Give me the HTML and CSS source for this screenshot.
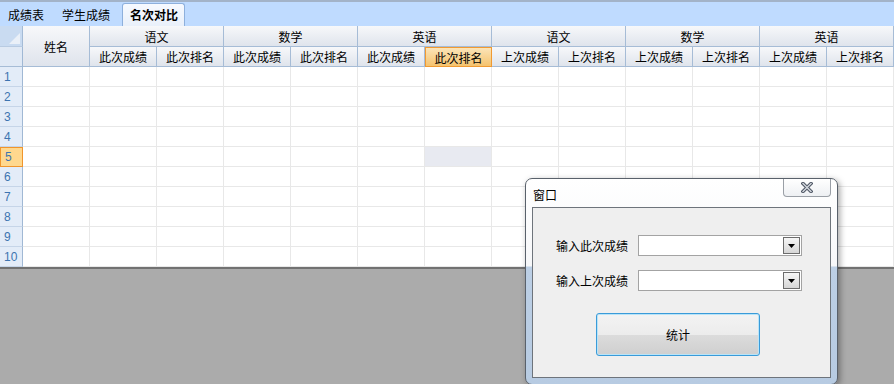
FILE: index.html
```html
<!DOCTYPE html>
<html lang="zh-CN">
<head>
    <meta charset="UTF-8">
    <title>名次对比</title>
    <link rel="stylesheet" href="styles.css">
</head>
<body>

<div class="tabs">
    <div class="tab">成绩表</div>
    <div class="tab second">学生成绩</div>
    <div class="tab active">名次对比</div>
</div>

<div class="sheet">
    <div class="corner"><span class="tri"></span></div>
    <div class="hd name">姓名</div>
    <div class="hd grp">语文</div>
    <div class="hd grp">数学</div>
    <div class="hd grp">英语</div>
    <div class="hd grp">语文</div>
    <div class="hd grp">数学</div>
    <div class="hd grp">英语</div>

    <div class="rh blank"></div>
    <div class="hd">此次成绩</div><div class="hd">此次排名</div>
    <div class="hd">此次成绩</div><div class="hd">此次排名</div>
    <div class="hd">此次成绩</div><div class="hd sel">此次排名</div>
    <div class="hd">上次成绩</div><div class="hd">上次排名</div>
    <div class="hd">上次成绩</div><div class="hd">上次排名</div>
    <div class="hd">上次成绩</div><div class="hd">上次排名</div>

    <div class="rh">1</div><div></div><div></div><div></div><div></div><div></div><div></div><div></div><div></div><div></div><div></div><div></div><div></div><div></div>
    <div class="rh">2</div><div></div><div></div><div></div><div></div><div></div><div></div><div></div><div></div><div></div><div></div><div></div><div></div><div></div>
    <div class="rh">3</div><div></div><div></div><div></div><div></div><div></div><div></div><div></div><div></div><div></div><div></div><div></div><div></div><div></div>
    <div class="rh">4</div><div></div><div></div><div></div><div></div><div></div><div></div><div></div><div></div><div></div><div></div><div></div><div></div><div></div>
    <div class="rh cur">5</div><div></div><div></div><div></div><div></div><div></div><div></div><div class="focus"></div><div></div><div></div><div></div><div></div><div></div><div></div>
    <div class="rh">6</div><div></div><div></div><div></div><div></div><div></div><div></div><div></div><div></div><div></div><div></div><div></div><div></div><div></div>
    <div class="rh">7</div><div></div><div></div><div></div><div></div><div></div><div></div><div></div><div></div><div></div><div></div><div></div><div></div><div></div>
    <div class="rh">8</div><div></div><div></div><div></div><div></div><div></div><div></div><div></div><div></div><div></div><div></div><div></div><div></div><div></div>
    <div class="rh">9</div><div></div><div></div><div></div><div></div><div></div><div></div><div></div><div></div><div></div><div></div><div></div><div></div><div></div>
    <div class="rh">10</div><div></div><div></div><div></div><div></div><div></div><div></div><div></div><div></div><div></div><div></div><div></div><div></div><div></div>
</div>

<div class="window">
    <div class="titlebar">
        <span class="title">窗口</span>
        <div class="close">
            <svg width="12" height="11" viewBox="0 0 12 11">
                <path d="M2 1.5 L10 9.5 M10 1.5 L2 9.5" stroke="#4d5563" stroke-width="3.4" stroke-linecap="square"/>
                <path d="M2 1.5 L10 9.5 M10 1.5 L2 9.5" stroke="#d4d8de" stroke-width="1.4" stroke-linecap="square"/>
            </svg>
        </div>
    </div>
    <div class="client">
        <div class="form">
            <label>输入此次成绩</label>
            <div class="combo"><span class="drop"><svg width="7" height="4" viewBox="0 0 7 4"><polygon points="0,0 7,0 3.5,4" fill="#000"/></svg></span></div>
            <label>输入上次成绩</label>
            <div class="combo"><span class="drop"><svg width="7" height="4" viewBox="0 0 7 4"><polygon points="0,0 7,0 3.5,4" fill="#000"/></svg></span></div>
        </div>
        <button class="btn">统计</button>
    </div>
</div>

</body>
</html>
```

FILE: styles.css
```css
html, body {
    margin: 0;
    height: 100%;
}
body {
    font-family: "Noto Sans CJK SC", "Liberation Sans", sans-serif;
    font-size: 12px;
    color: #000;
    background: #ababab;
    overflow: hidden;
    position: relative;
}

/* tab strip */
.tabs {
    display: flex;
    align-items: flex-end;
    height: 24px;
    border-top: 2px solid #a3b3c8;
    background: #bfdbff;
}
.tab {
    height: 22px;
    line-height: 22px;
    padding: 0 8px;
}
.tab.second {
    margin-left: 2px;
}
.tab.active {
    margin-left: 4px;
    padding: 0 6px 0 7px;
    font-weight: bold;
    border: 1px solid #8eb0dc;
    border-bottom: none;
    border-radius: 3px 3px 0 0;
    background: linear-gradient(#f7faff, #e9f0fa);
}

/* grid */
.sheet {
    display: grid;
    grid-template-columns: 23px repeat(13, 67px);
    grid-template-rows: 21px 20px;
    grid-auto-rows: 20px;
    background: #fff;
    border-bottom: 2px solid #717171;
}
.sheet > div {
    box-sizing: border-box;
    border-right: 1px solid #e8e8e8;
    border-bottom: 1px solid #e8e8e8;
}
.sheet > .corner {
    display: flex;
    align-items: flex-end;
    justify-content: flex-end;
    padding: 0 2px 2px 0;
    background: #c9dbf1;
    border-right: 1px solid #a4bbd6;
    border-bottom: 1px solid #b8cbe2;
}
.tri {
    width: 0;
    height: 0;
    border-left: 11px solid transparent;
    border-bottom: 11px solid #eaf0f8;
}
.sheet > .hd {
    display: flex;
    align-items: center;
    justify-content: center;
    background: linear-gradient(#f7f8fa, #dfe4ec);
    border-right: 1px solid #a6bcd6;
    border-bottom: 1px solid #a6bcd6;
}
.sheet > .hd.name {
    grid-row: span 2;
}
.sheet > .hd.grp {
    grid-column: span 2;
}
.sheet > .hd.sel {
    background: linear-gradient(#fbe4b8, #f5c36e);
    border: 1px solid #f09a32;
}
.sheet > .rh {
    display: flex;
    align-items: center;
    padding-left: 4px;
    font-family: "Liberation Sans", sans-serif;
    font-size: 12px;
    color: #3d74b0;
    background: #e3ecf8;
    border-right: 1px solid #a0b8d4;
    border-bottom: 1px solid #c6d5e8;
}
.sheet > .rh.blank {
    background: #e0e9f5;
    border-bottom: 1px solid #a6bcd6;
}
.sheet > .rh.cur {
    background: #ffd88e;
    border: 1px solid #f0952c;
}
.sheet > .focus {
    background: #e8eaf1;
}

/* dialog */
.window {
    position: absolute;
    left: 525px;
    top: 178px;
    width: 313px;
    height: 207px;
    box-sizing: border-box;
    padding: 0 6px 6px 6px;
    border: 1px solid #59616b;
    border-radius: 7px;
    background: linear-gradient(#ffffff 0, #f6f7f9 87px, #bccfe5 88px, #b7cbe2 100%);
    box-shadow: 2px 2px 6px rgba(0, 0, 0, 0.35);
}
.titlebar {
    display: flex;
    height: 28px;
}
.title {
    align-self: center;
    padding: 2px 0 0 1px;
}
.close {
    margin-left: auto;
    width: 48px;
    height: 18px;
    display: flex;
    align-items: center;
    justify-content: center;
    box-sizing: border-box;
    border: 1px solid #9a9fa6;
    border-top: none;
    border-radius: 0 0 4px 4px;
    background: linear-gradient(#ffffff, #eef0f3);
}
.client {
    height: 171px;
    box-sizing: border-box;
    border: 1px solid #6e747b;
    background: #efefef;
    padding: 27px 0 0 23px;
}
.form {
    display: grid;
    grid-template-columns: 82px 164px;
    grid-auto-rows: 21px;
    row-gap: 14px;
    align-items: center;
}
.combo {
    height: 21px;
    box-sizing: border-box;
    display: flex;
    justify-content: flex-end;
    padding: 1px;
    border: 1px solid #a3a3a3;
    background: #fff;
}
.drop {
    width: 17px;
    height: 17px;
    box-sizing: border-box;
    display: flex;
    align-items: center;
    justify-content: center;
    border: 1px solid #6c6c6c;
    background: linear-gradient(#f6f6f6, #d6d6d6);
}
.btn {
    display: block;
    margin: 22px 0 0 40px;
    width: 164px;
    height: 43px;
    font-family: inherit;
    font-size: 12px;
    color: #000;
    border: 1px solid #3a9bd9;
    border-radius: 3px;
    box-shadow: inset 0 0 0 1px #b9e4f8;
    background: linear-gradient(#f3f3f3 0, #ececec 50%, #dcdcdc 50%, #cfcfcf 100%);
}
```
